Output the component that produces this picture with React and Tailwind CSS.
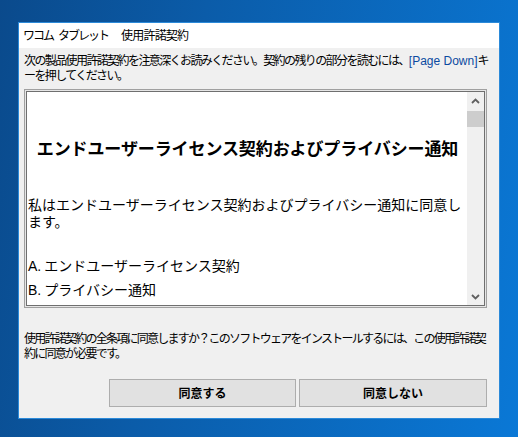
import React from "react";

const jp = { fontFamily: '"Noto Sans CJK JP", "Noto Sans", sans-serif' };
const lat = { fontFamily: '"Liberation Sans", "Noto Sans CJK JP", sans-serif' };

function Chevron({ up }) {
  return (
    <svg width="9" height="6" viewBox="0 0 9 6">
      <path
        d={up ? "M1 5 L4.5 1.5 L8 5" : "M1 1 L4.5 4.5 L8 1"}
        fill="none"
        stroke="#606060"
        strokeWidth="1.8"
      />
    </svg>
  );
}

export default function App() {
  return (
    <div className="w-[518px] h-[437px] overflow-hidden bg-[linear-gradient(100deg,#0a4a8c_0%,#0b5ca9_35%,#0a78d6_100%)] pt-[22px] pl-[18px]">
      <div className="w-[482px] h-[397px] border border-[#2b8ad9] bg-[#f0f0f0] flex flex-col" style={jp}>
        {/* title bar */}
        <div className="h-[25px] bg-white pl-[4px] pt-[4px] text-[12px] leading-[15px] text-black whitespace-nowrap">
          <span className="tracking-[-2px]">ワコム</span>
          <span className="inline-block w-[5px]" />
          <span className="tracking-[-2px]">タブレット</span>
          <span className="inline-block w-[13px]" />
          <span className="tracking-[-0.8px]">使用許諾契約</span>
        </div>
        {/* body */}
        <div className="flex flex-col px-[5px] pt-[4px]">
          <div className="text-[12px] leading-[15px] text-black whitespace-nowrap">
            <div className="h-[15px] overflow-visible">
              <span className="tracking-[-1.6px]">次の製品使用許諾契約を注意深くお読みください。契約の残りの部分を読むには、</span>
              <span className="text-[#0b4aa0]" style={lat}>[Page Down]</span>
              <span className="tracking-[-1.6px]">キ</span>
            </div>
            <div className="h-[15px] tracking-[-1.6px]">ーを押してください。</div>
          </div>

          {/* text box */}
          <div className="mt-[7px] h-[219px] w-[463px] border border-[#a0a0a0] bg-[#e6e6e6] p-[1px]">
            <div className="h-full border border-[#6f6f6f] bg-white flex">
              <div className="flex-1 overflow-hidden pl-[1px] text-black">
                <div className="mt-[46px] h-[20px] text-center text-[17px] leading-[20px] font-bold tracking-[-0.1px]">
                  エンドユーザーライセンス契約およびプライバシー通知
                </div>
                <div className="mt-[38px] text-[14px] leading-[17px]">
                  <div className="h-[17px] whitespace-nowrap">私はエンドユーザーライセンス契約およびプライバシー通知に同意し</div>
                  <div className="h-[17px]">ます。</div>
                </div>
                <div className="mt-[27px] h-[17px] text-[14px] leading-[17px]">
                  <span style={lat}>A.</span> エンドユーザーライセンス契約
                </div>
                <div className="mt-[7px] h-[17px] text-[14px] leading-[17px]">
                  <span style={lat}>B.</span> プライバシー通知
                </div>
              </div>
              {/* scrollbar */}
              <div className="w-[17px] bg-[#f0f0f0] flex flex-col">
                <div className="h-[17px] flex items-center justify-center">
                  <Chevron up />
                </div>
                <div className="mt-[2px] h-[16px] bg-[#cdcdcd]" />
                <div className="flex-1" />
                <div className="h-[17px] flex items-center justify-center">
                  <Chevron />
                </div>
              </div>
            </div>
          </div>

          <div className="mt-[22px] text-[12px] leading-[15px] text-black tracking-[-1.75px] whitespace-nowrap">
            <div className="h-[15px]">使用許諾契約の全条項に同意しますか？このソフトウェアをインストールするには、この使用許諾契</div>
            <div className="h-[15px]">約に同意が必要です。</div>
          </div>

          <div className="mt-[19px] flex justify-end gap-[3px] pr-[7px]">
            <button className="w-[187px] h-[28px] border border-[#adadad] bg-[#e1e1e1] text-[12px] font-bold text-black flex items-center justify-center">
              同意する
            </button>
            <button className="w-[188px] h-[28px] border border-[#adadad] bg-[#e1e1e1] text-[12px] font-bold text-black flex items-center justify-center">
              同意しない
            </button>
          </div>
        </div>
      </div>
    </div>
  );
}
